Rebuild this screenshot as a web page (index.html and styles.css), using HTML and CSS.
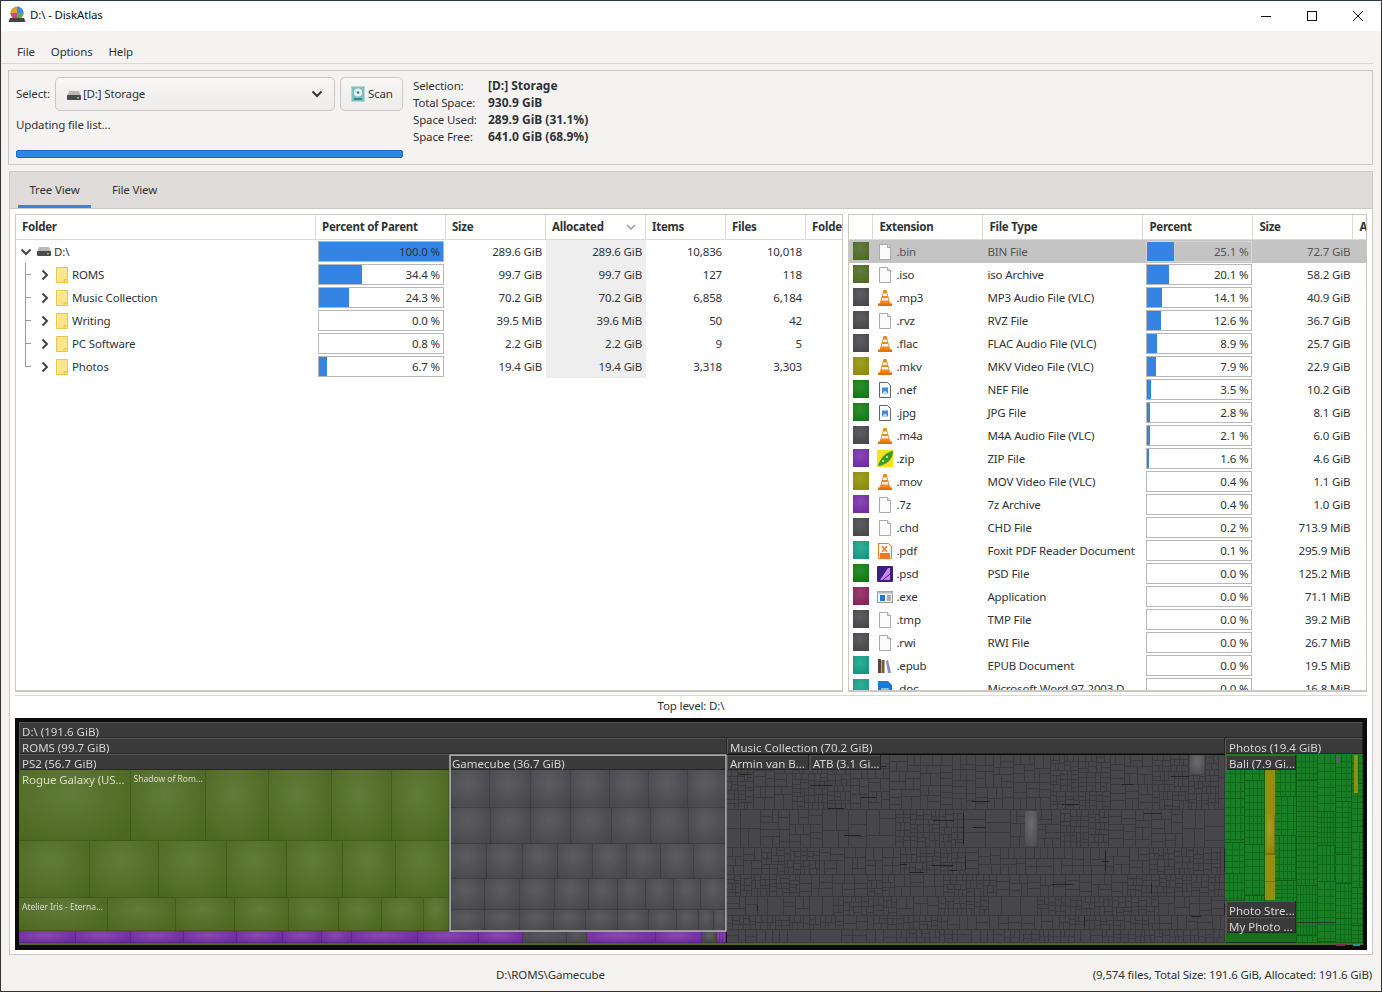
FILE: index.html
```html
<!DOCTYPE html>
<html lang="en">
<head>
<meta charset="utf-8">
<title>D:\ - DiskAtlas</title>
<link rel="stylesheet" href="styles.css">
</head>
<body>
<div class="window">
  <header class="titlebar">
    <svg class="appicon" width="18" height="18" viewBox="0 0 18 18"><circle cx="9" cy="7" r="6.500" fill="#e0a030"/><path d="M9 .5a6.500 6.500 0 0 1 6.500 6.500H9z" fill="#3f8fd8"/><path d="M15.500 7A6.500 6.500 0 0 1 9 13.500V7z" fill="#5fae4a"/><path d="M2.500 7A6.500 6.500 0 0 0 9 13.500V7z" fill="#c24a8a"/><path d="M2 12h14l1.500 4h-17z" fill="#444"/></svg>
    <span class="title">D:\ - DiskAtlas</span>
    <div class="winbtns">
      <svg width="46" height="30" viewBox="0 0 46 30"><path d="M18 15.500h10" stroke="#111" fill="none"/></svg>
      <svg width="46" height="30" viewBox="0 0 46 30"><rect x="18.500" y="10.500" width="9" height="9" stroke="#111" fill="none"/></svg>
      <svg width="46" height="30" viewBox="0 0 46 30"><path d="M18 10l10 10M28 10l-10 10" stroke="#111" fill="none"/></svg>
    </div>
  </header>
  <nav class="menubar"><span>File</span><span>Options</span><span>Help</span></nav>
  <section class="selpanel">
    <div class="selleft">
      <div class="selrow">
        <span class="lift">Select:</span>
        <div class="combo">
          <svg class="drive" width="14" height="9" viewBox="0 0 14 9"><path d="M2 0h10l2 5H0z" fill="#b9b9b9"/><rect y="4" width="14" height="5" rx="1" fill="#4a4a4a"/><rect x="10" y="6" width="2" height="1.500" fill="#5ed35e"/></svg>
          <span class="combotext lift">[D:] Storage</span>
          <svg class="caret" width="12" height="8" viewBox="0 0 12 8"><path d="M1.500 1.500L6 6l4.500-4.500" stroke="#2e3436" stroke-width="2" fill="none"/></svg>
        </div>
        <div class="scanbtn">
          <svg width="14" height="16" viewBox="0 0 14 16"><rect x="0.500" y="0.500" width="13" height="15" fill="#7fc0c0" stroke="#b8d8d8"/><circle cx="7" cy="6.500" r="4" fill="#e8f2f2"/><circle cx="7" cy="6.500" r="1.300" fill="#3a7a7a"/><rect x="3" y="12" width="8" height="2" fill="#3f8a8a"/></svg>
          <span class="lift">Scan</span>
        </div>
      </div>
      <div class="updating">Updating file list...</div>
      <div class="progress"></div>
    </div>
    <dl class="stats">
      <dt>Selection:</dt><dd>[D:] Storage</dd>
      <dt>Total Space:</dt><dd>930.9 GiB</dd>
      <dt>Space Used:</dt><dd>289.9 GiB (31.1%)</dd>
      <dt>Space Free:</dt><dd>641.0 GiB (68.9%)</dd>
    </dl>
  </section>
  <section class="tabpane">
    <div class="tabs"><span class="tab active">Tree View</span><span class="tab">File View</span></div>
    <div class="tabbody">
      <div class="tables">
        <div class="table lefttable" id="tree">
          <div class="row head"><div class="c c-folder">Folder</div><div class="c c-pp">Percent of Parent</div><div class="c c-size">Size</div><div class="c c-alloc">Allocated<svg class="sort" width="10" height="6" viewBox="0 0 10 6"><path d="M1 1l4 4 4-4" stroke="#999" stroke-width="1.500" fill="none"/></svg></div><div class="c c-items">Items</div><div class="c c-files">Files</div><div class="c c-folders">Folders</div></div>
        </div>
        <div class="table righttable" id="ext">
          <div class="row head"><div class="c c-sw"></div><div class="c c-ext">Extension</div><div class="c c-type">File Type</div><div class="c c-pct">Percent</div><div class="c c-rsize">Size</div><div class="c c-more">Allocated</div></div>
        </div>
      </div>
      <div class="toplevel">Top level: D:\</div>
      <div class="treemap" id="treemap"><canvas id="tm" width="1352" height="232"></canvas></div>
    </div>
  </section>
  <footer class="status"><span class="path">D:\ROMS\Gamecube</span><span class="summary">(9,574 files, Total Size: 191.6 GiB, Allocated: 191.6 GiB)</span></footer>
</div>
<script src="app.js"></script>
</body>
</html>
```
FILE: styles.css
```css
* { box-sizing: border-box; }
html, body { margin: 0; padding: 0; background: #f5f3f2; }
body { font: 11.500px "Noto Sans", sans-serif; letter-spacing: -0.15px; color: #2e3436; width: 1382px; height: 992px; overflow: hidden; }
.window { width: 1382px; height: 992px; border-top: 1px solid #2b3a4a; border-left: 1px solid #333; border-right: 1px solid #333; border-bottom: 1px solid #333; display: flex; flex-direction: column; background: #f5f3f2; overflow: hidden; }
.titlebar { height: 30px; background: #fff; display: flex; align-items: center; padding-left: 7px; flex: none; color: #111; }
.appicon { margin-right: 4px; margin-top: -2px; }
.title { flex: 1; margin-top: -3px; }
.winbtns { display: flex; margin-top: -1px; }
.winbtns svg { display: block; }
.menubar { height: 33px; flex: none; display: flex; align-items: center; gap: 16px; padding: 11px 16px 3px 16px; margin-right: 8px; border-bottom: 1px solid #dcd9d5; }
.selpanel { flex: none; margin: 6px 8px 0 7px; height: 95px; border: 1px solid #cdc7c2; display: flex; padding: 6px 7px; }
.selleft { width: 388px; flex: none; display: flex; flex-direction: column; }
.selrow { display: flex; align-items: center; gap: 5px; height: 34px; }
.lift { padding-bottom: 2px; }
.combo { width: 280px; height: 34px; border: 1px solid #cdc7c2; border-radius: 5px; background: linear-gradient(#f8f7f6, #eeecea); display: flex; align-items: center; padding: 0 11px 0 11px; flex: none; }
.drive { margin-right: 2px; margin-top: 2px; }
.combotext { flex: 1; }
.scanbtn { width: 63px; height: 34px; border: 1px solid #cdc7c2; border-radius: 5px; background: linear-gradient(#f8f7f6, #eeecea); display: flex; align-items: center; gap: 3px; padding-left: 10px; flex: none; }
.updating { margin-top: 5px; height: 17px; line-height: 17px; }
.progress { margin-top: 17px; height: 8px; width: 387px; background: #3584e4; border: 1px solid #1f68c4; border-radius: 2px; }
.stats { margin: 0 0 0 9px; display: grid; grid-template-columns: 75px auto; grid-auto-rows: 17px; line-height: 17px; }
.stats dt { font-weight: 400; }
.stats dd { margin: 0; font-weight: 700; font-size: 12px; letter-spacing: 0; }
.tabpane { flex: 1; margin: 6px 8px 0 8px; border: 1px solid #cdc7c2; display: flex; flex-direction: column; min-height: 0; }
.tabs { height: 37px; flex: none; background: #e0dcd9; display: flex; padding-left: 8px; border-bottom: 1px solid #cdc7c2; }
.tab { width: 73px; height: 36px; line-height: 36px; text-align: center; }
.tab + .tab { width: 87px; }
.tab.active { border-bottom: 3px solid #3584e4; }
.tabbody { flex: 1; background: #fff; padding: 5px 5px 5px 5px; display: flex; flex-direction: column; min-height: 0; }
.tables { display: flex; gap: 5px; height: 478px; flex: none; }
.table { border: 1px solid #cdc7c2; border-bottom-width: 2px; overflow: hidden; background: #fff; }
.lefttable { width: 829px; }
.righttable { width: 519px; }
.row { display: flex; height: 23px; line-height: 24px; white-space: nowrap; }
.row.head { height: 25px; line-height: 24px; font-weight: 700; letter-spacing: -0.25px; border-bottom: 1px solid #dcd9d5; }
.row.head .c { border-right: 1px solid #dcd9d5; height: 24px; padding: 0 6px; overflow: hidden; position: relative; }
.c { flex: none; overflow: hidden; }
.c-folder { width: 300px; display: flex; align-items: center; }
.c-pp { width: 130px; }
.c-size, .c-alloc { width: 100px; }
.c-items, .c-files { width: 80px; }
.c-folders { width: 60px; }
.c-sw { width: 25px; }
.row.head .c-sw { width: 24px; }
.c-ext { width: 110px; }
.c-type { width: 160px; }
.c-pct { width: 110px; }
.c-rsize { width: 100px; }
.c-more { width: 30px; }
.num { text-align: right; padding-right: 4px; }
.row .num-alloc { background: #eeeeee; }
.sort { position: absolute; right: 9px; top: 9px; }
.barbox { margin: 1px 2px 0 2px; height: 21px; border: 1px solid #b8b8b8; position: relative; line-height: 20px; text-align: right; padding-right: 3px; background: #fff; }
.barfill { position: absolute; left: 0; top: 0; bottom: 0; background: #3584e4; }
.barlabel { position: relative; }
.selrowbg { background: #c4c4c4; color: #555; }
.selrowbg .barbox { background: #c4c4c4; border-color: #d4d4d4; }
.tree-name { display: flex; align-items: center; height: 23px; position: relative; }
.tree-name span { padding-top: 1px; }
.guide { position: absolute; left: 9px; top: -1px; width: 1px; background: #9a9a9a; height: 24px; }
.guide.last { height: 12px; }
.hline { position: absolute; left: 9px; top: 11px; width: 6px; height: 1px; background: #9a9a9a; }
.expander { flex: none; margin-left: 25px; margin-right: 7px; display: block; }
.folder { flex: none; margin-right: 4px; display: block; }
.expander.root { margin-left: 4px; margin-right: 5px; }
.root-drive { margin-right: 3px; flex: none; }
.swatch { display: block; margin: 2px 0 0 4px; width: 16px; height: 18px; background: radial-gradient(circle at 45% 35%, var(--a), var(--b)); }
.c-ext.cell { display: flex; align-items: center; padding-left: 3px; }
.c-ext.cell svg { flex: none; margin-right: 3px; width: 16px; height: 18px; }
.c-ext.cell span { padding-top: 1px; }
.c-type.cell { padding-left: 3px; }
.treemap { position: relative; flex: none; width: 1352px; height: 232px; background: #0c0c0c; overflow: hidden; }
.treemap canvas { display: block; }
.tmlabel { position: absolute; color: #d4d4d4; line-height: 16px; height: 16px; white-space: nowrap; overflow: hidden; letter-spacing: 0; }
.tmlabel.small { font-size: 8.500px; color: #d9dcc8; }
.tmlabel.big { font-size: 11.500px; color: #d9dcc8; letter-spacing: -0.1px; }
.toplevel { margin-top: 3px; height: 23px; line-height: 20px; border-top: 1px solid #dcd9d5; text-align: center; flex: none; }
.status { height: 36px; flex: none; display: flex; justify-content: space-between; align-items: center; padding: 2px 9px 0 495px; }
```
FILE: app.js
```js
(function () {
  var icons = {
    blank: '<svg viewBox="0 0 16 18"><path d="M2.500 1.500h8l3 3v12h-11z" fill="#fbfbfb" stroke="#aaa"/><path d="M10.500 1.500v3h3" fill="#e6e6e6" stroke="#aaa"/></svg>',
    vlc: '<svg viewBox="0 0 16 18"><path d="M6.500 1h3l4 14h-11z" fill="#f08a1c"/><path d="M6.200 4.500h3.600l.6 2.500H5.600zM5 9h6l.6 2.500H4.400z" fill="#f4f4f4"/><rect x="1" y="14.500" width="14" height="2.500" fill="#e36f0e"/></svg>',
    img: '<svg viewBox="0 0 16 18"><path d="M2.500 1.500h8l3 3v12h-11z" fill="#fbfbfb" stroke="#666"/><rect x="5" y="6.500" width="6" height="6" fill="#3a8fe0"/><path d="M5 12.500l3-3 3 3z" fill="#bfe0f7"/></svg>',
    zip: '<svg viewBox="0 0 16 18"><rect width="16" height="17" fill="#f4e21a"/><path d="M1 16C3 8 9 2 16 1c0 8-6 14-15 15z" fill="#3c9a2c"/><circle cx="6" cy="11" r="1" fill="#e8f6a0"/><circle cx="10" cy="7" r="1" fill="#e8f6a0"/></svg>',
    pdf: '<svg viewBox="0 0 16 18"><path d="M1.500 1.500h10l3 3v12h-13z" fill="#fff" stroke="#f0781e"/><path d="M5 4l5 6M10 4l-5 6" stroke="#f0781e" stroke-width="1.500"/><rect x="3" y="11" width="10" height="5" fill="#f0781e"/></svg>',
    psd: '<svg viewBox="0 0 16 18"><rect width="16" height="16" y="1" rx="1" fill="#3f1f7e"/><path d="M3 15L11 3h2v12z" fill="#c886e8"/><path d="M6 15l7-6" stroke="#3f1f7e"/></svg>',
    exe: '<svg viewBox="0 0 16 18"><rect x="0.500" y="3.500" width="15" height="11" fill="#f4f4f4" stroke="#999"/><rect x="0.500" y="3.500" width="15" height="2" fill="#bbb"/><rect x="3" y="7" width="5" height="6" fill="#1e78d6"/><path d="M10 8h4M10 10h4M10 12h4" stroke="#666"/></svg>',
    epub: '<svg viewBox="0 0 16 18"><rect x="1" y="2" width="3" height="14" fill="#5b4636"/><rect x="4.500" y="3" width="3" height="13" fill="#7a5a3c"/><path d="M9 4l2-1 3 13h-3z" fill="#7c8fc8"/></svg>',
    word: '<svg viewBox="0 0 16 18"><path d="M1 1h10l4 4v12H1z" fill="#1e78d6"/><path d="M4 9h8M4 12h8" stroke="#fff"/></svg>'
  };
  var G = ['#647c3e', '#4c671e'], D = ['#5e5e62', '#434347'], Y = ['#a0a022', '#86860a'], E = ['#2c8f2c', '#127012'], P = ['#8a48b4', '#6a269e'], T = ['#2eb09a', '#119077'], M = ['#a03c70', '#7d1f50'];
  var ext = [
    [G, 'blank', '.bin', 'BIN File', 25.1, '72.7 GiB'], [G, 'blank', '.iso', 'iso Archive', 20.1, '58.2 GiB'],
    [D, 'vlc', '.mp3', 'MP3 Audio File (VLC)', 14.1, '40.9 GiB'], [D, 'blank', '.rvz', 'RVZ File', 12.6, '36.7 GiB'],
    [D, 'vlc', '.flac', 'FLAC Audio File (VLC)', 8.9, '25.7 GiB'], [Y, 'vlc', '.mkv', 'MKV Video File (VLC)', 7.9, '22.9 GiB'],
    [E, 'img', '.nef', 'NEF File', 3.5, '10.2 GiB'], [E, 'img', '.jpg', 'JPG File', 2.8, '8.1 GiB'],
    [D, 'vlc', '.m4a', 'M4A Audio File (VLC)', 2.1, '6.0 GiB'], [P, 'zip', '.zip', 'ZIP File', 1.6, '4.6 GiB'],
    [Y, 'vlc', '.mov', 'MOV Video File (VLC)', 0.4, '1.1 GiB'], [P, 'blank', '.7z', '7z Archive', 0.4, '1.0 GiB'],
    [D, 'blank', '.chd', 'CHD File', 0.2, '713.9 MiB'], [T, 'pdf', '.pdf', 'Foxit PDF Reader Document', 0.1, '295.9 MiB'],
    [E, 'psd', '.psd', 'PSD File', 0.0, '125.2 MiB'], [M, 'exe', '.exe', 'Application', 0.0, '71.1 MiB'],
    [D, 'blank', '.tmp', 'TMP File', 0.0, '39.2 MiB'], [D, 'blank', '.rwi', 'RWI File', 0.0, '26.7 MiB'],
    [T, 'epub', '.epub', 'EPUB Document', 0.0, '19.5 MiB'], [T, 'word', '.doc', 'Microsoft Word 97-2003 D', 0.0, '16.8 MiB']
  ];
  var extEl = document.getElementById('ext');
  ext.forEach(function (r, i) {
    var fill = Math.round(r[4] * 1.02 * 10) / 10;
    if (r[4] < 1.6) fill = 0;
    var row = document.createElement('div');
    row.className = 'row' + (i === 0 ? ' selrowbg' : '');
    row.innerHTML = '<div class="c c-sw"><span class="swatch" style="--a:' + r[0][0] + ';--b:' + r[0][1] + '"></span></div>' +
      '<div class="c c-ext cell">' + icons[r[1]] + '<span>' + r[2] + '</span></div>' +
      '<div class="c c-type cell">' + r[3] + '</div>' +
      '<div class="c c-pct"><div class="barbox"><div class="barfill" style="width:' + fill + '%"></div><span class="barlabel">' + r[4].toFixed(1) + ' %</span></div></div>' +
      '<div class="c c-rsize num">' + r[5] + '</div>';
    extEl.appendChild(row);
  });
  var tree = [
    ['D:\\', 100, '289.6 GiB', '289.6 GiB', '10,836', '10,018'], ['ROMS', 34.4, '99.7 GiB', '99.7 GiB', '127', '118'],
    ['Music Collection', 24.3, '70.2 GiB', '70.2 GiB', '6,858', '6,184'], ['Writing', 0, '39.5 MiB', '39.6 MiB', '50', '42'],
    ['PC Software', 0.8, '2.2 GiB', '2.2 GiB', '9', '5'], ['Photos', 6.7, '19.4 GiB', '19.4 GiB', '3,318', '3,303']
  ];
  var chevR = '<svg class="expander" width="8" height="12" viewBox="0 0 8 12"><path d="M1.500 1.500L6 6l-4.500 4.500" stroke="#444" stroke-width="2" fill="none"/></svg>';
  var chevD = '<svg class="expander root" width="12" height="8" viewBox="0 0 12 8"><path d="M1.500 1.500L6 6l4.500-4.500" stroke="#444" stroke-width="2" fill="none"/></svg>';
  var drive = '<svg class="root-drive" width="14" height="9" viewBox="0 0 14 9"><path d="M2 0h10l2 5H0z" fill="#b9b9b9"/><rect y="4" width="14" height="5" rx="1" fill="#4a4a4a"/><rect x="10" y="6" width="2" height="1.500" fill="#5ed35e"/></svg>';
  var folder = '<svg class="folder" width="12" height="16" viewBox="0 0 12 16"><rect x="0.500" y="0.500" width="11" height="15" fill="#fde58c" stroke="#eec64a"/><path d="M8 15.500v-3h3.500" fill="#f4cf5c" stroke="#eec64a"/></svg>';
  var treeEl = document.getElementById('tree');
  tree.forEach(function (r, i) {
    var row = document.createElement('div');
    row.className = 'row';
    var name = i === 0
      ? chevD + drive + '<span>' + r[0] + '</span>'
      : '<i class="guide' + (i === 5 ? ' last' : '') + '"></i><i class="hline"></i>' + chevR + folder + '<span>' + r[0] + '</span>';
    var w = r[1] === 0.8 ? 0 : r[1];
    row.innerHTML = '<div class="c c-folder"><div class="tree-name">' + name + '</div></div>' +
      '<div class="c c-pp"><div class="barbox"><div class="barfill" style="width:' + w + '%"></div><span class="barlabel">' + r[1].toFixed(1) + ' %</span></div></div>' +
      '<div class="c c-size num">' + r[2] + '</div><div class="c c-alloc num num-alloc">' + r[3] + '</div>' +
      '<div class="c c-items num">' + r[4] + '</div><div class="c c-files num">' + r[5] + '</div>';
    treeEl.appendChild(row);
  });

  // treemap: coordinates below are page coordinates, shifted by the map origin
  var OX = 15, OY = 718;
  var cv = document.getElementById('tm'), g = cv.getContext('2d');
  var seed = 12345;
  function rnd() { seed = (seed * 16807) % 2147483647; return seed / 2147483647; }
  function tile(x0, y0, x1, y1, c) {
    var w = x1 - x0, h = y1 - y0, cx = x0 - OX + w * 0.45, cy = y0 - OY + h * 0.35;
    g.save();
    g.beginPath(); g.rect(x0 - OX, y0 - OY, w, h); g.clip();
    g.translate(cx, cy); g.scale(w * 0.72, h * 0.8);
    var gr = g.createRadialGradient(0, 0, 0, 0, 0, 1);
    gr.addColorStop(0, c[0]); gr.addColorStop(1, c[1]);
    g.fillStyle = gr;
    g.fillRect(-3, -3, 6, 6);
    g.restore();
    g.fillStyle = 'rgba(0,0,0,0.13)';
    g.fillRect(x1 - OX - 1, y0 - OY, 1, h);
    g.fillRect(x0 - OX, y1 - OY - 1, w, 1);
  }
  function band(y0, y1, xs, c) {
    for (var i = 0; i < xs.length - 1; i++) tile(xs[i], y0, xs[i + 1], y1, c);
  }
  function flat(x0, y0, x1, y1, col) {
    g.fillStyle = col; g.fillRect(x0 - OX, y0 - OY, x1 - x0, y1 - y0);
  }
  flat(19, 943, 1363, 945, '#4c671e');
  var GG = ['#627b3b', '#4c671e'];
  band(770, 841, [19, 131, 206, 269, 332, 392, 449], GG);
  band(841, 898, [19, 90, 159, 227, 287, 343, 396, 449], GG);
  band(898, 931, [19, 108, 176, 235, 289, 339, 382, 424, 449], GG);
  band(931, 943, [19, 76, 131, 184, 237, 283, 322, 352, 418, 479, 523], P);
  band(931, 943, [523, 567, 587], ['#58585c', '#47474b']);
  band(931, 943, [587, 656, 702], P);
  band(931, 943, [702, 717], D);
  band(931, 943, [717, 720, 723, 726], P);
  var gD = ['#5c5c60', '#47474b'];
  band(770, 808, [450, 490, 531, 571, 610, 649, 688, 726], gD);
  band(808, 844, [450, 491, 531, 571, 612, 651, 689, 726], gD);
  band(844, 879, [450, 487, 523, 558, 593, 627, 661, 694, 726], gD);
  band(879, 910, [450, 485, 520, 555, 589, 618, 646, 674, 701, 726], gD);
  band(910, 931, [450, 485, 520, 554, 586, 618, 649, 677, 699, 714, 726], gD);
  // textured area: recursive splits, each leaf gets a thin darker outline
  function split(x0, y0, x1, y1, min, draw) {
    var w = x1 - x0, h = y1 - y0;
    if ((w <= min && h <= min) || (w * h < min * min * 1.4)) { draw(x0, y0, x1, y1); return; }
    var f = 0.32 + rnd() * 0.36;
    if (w > h * 1.1) { var m = Math.round(x0 + w * f); split(x0, y0, m, y1, min, draw); split(m, y0, x1, y1, min, draw); }
    else { var n = Math.round(y0 + h * f); split(x0, y0, x1, n, min, draw); split(x0, n, x1, y1, min, draw); }
  }
  function leaf(base, line) {
    return function (x0, y0, x1, y1) {
      flat(x0, y0, x1, y1, base);
      g.fillStyle = line;
      g.fillRect(x0 - OX, y1 - OY - 1, x1 - x0, 1);
      g.fillRect(x1 - OX - 1, y0 - OY, 1, y1 - y0);
    };
  }
  var ms = [755, 810, 848, 875, 897, 916, 930, 943];
  flat(727, 755, 1225, 943, '#45454a');
  for (var b = 0; b < ms.length - 1; b++) {
    var x = 727;
    while (x < 1225) {
      var nx = Math.min(1225, x + 22 + Math.round(rnd() * 55));
      var coarse = rnd();
      var mn = coarse < 0.18 ? 17 : coarse < 0.55 ? 10 : 6;
      split(x, ms[b], nx, ms[b + 1], mn, leaf('#47474b', '#3a3a3e'));
      if (rnd() < 0.14) {
        flat(nx - 1, ms[b] + Math.round(rnd() * 10), nx, ms[b + 1] - Math.round(rnd() * 8), '#222226');
      }
      x = nx;
    }
  }
  for (var d = 0; d < 20; d++) {
    var dx = 730 + Math.round(rnd() * 470), dy = 760 + Math.round(rnd() * 175);
    flat(dx, dy, dx + 6 + Math.round(rnd() * 16), dy + 1, '#232326');
  }
  tile(1025, 811, 1038, 847, ['#6c6c70', '#4b4b4f']);
  tile(1190, 755, 1205, 775, ['#6c6c70', '#4b4b4f']);
  // Photos: stacks of regular fine grids
  flat(1225, 754, 1363, 943, '#187f24');
  function grid(x0, y0, x1, y1, cw, ch) {
    g.fillStyle = '#11691c';
    for (var gx = x0 + cw; gx < x1; gx += cw) g.fillRect(gx - OX, y0 - OY, 1, y1 - y0);
    for (var gy = y0 + ch; gy < y1; gy += ch) g.fillRect(x0 - OX, gy - OY, x1 - x0, 1);
    g.fillStyle = '#0f5f19';
    g.fillRect(x1 - OX - 1, y0 - OY, 1, y1 - y0);
    g.fillRect(x0 - OX, y1 - OY - 1, x1 - x0, 1);
  }
  [[1225, 1245], [1245, 1265], [1275, 1297], [1297, 1318], [1318, 1336], [1336, 1352], [1352, 1363]].forEach(function (c) {
    var y = 755;
    while (y < 943) {
      var ny = Math.min(943, y + 25 + Math.round(rnd() * 40));
      grid(c[0], y, c[1], ny, 3 + Math.round(rnd() * 4), 4 + Math.round(rnd() * 5));
      y = ny;
    }
  });
  flat(1265, 770, 1275, 900, '#8f8f10');
  tile(1265, 815, 1275, 854, Y);
  flat(1265, 854, 1275, 855, '#73730a'); flat(1265, 881, 1275, 882, '#73730a');
  flat(1354, 755, 1358, 793, '#8f8f10');
  flat(1336, 755, 1340, 762, '#5c5c62');
  flat(1226, 933, 1296, 942, '#1b6b22');
  flat(1226, 942, 1296, 943, '#1c2a1c');
  flat(1297, 922, 1336, 923, '#1f3a20');
  flat(1336, 944, 1345, 946, '#8a2458');
  flat(1353, 944, 1360, 946, '#14a08a');
  function bar(x0, y0, x1, y1) {
    flat(x0, y0, x1, y1, '#3a3a3a');
    flat(x0, y0, x1, y0 + 1, '#565656');
    flat(x0, y1 - 1, x1, y1, '#262626');
    flat(x0, y0, x0 + 1, y1, '#565656');
    flat(x1 - 1, y0, x1, y1, '#262626');
  }
  bar(19, 722, 1363, 738); bar(19, 738, 727, 754); bar(727, 738, 1225, 754); bar(1225, 738, 1363, 754);
  bar(19, 754, 450, 770); bar(450, 755, 726, 770); bar(727, 755, 809, 770); bar(810, 755, 881, 770);
  bar(1226, 755, 1296, 770); bar(1226, 901, 1296, 917); bar(1226, 917, 1296, 933);
  g.strokeStyle = '#b9b9b9'; g.lineWidth = 1.5;
  g.strokeRect(450 - OX, 755 - OY, 276, 176);

  var labels = [
    ['D:\\ (191.6 GiB)', 22, 724], ['ROMS (99.7 GiB)', 22, 740], ['PS2 (56.7 GiB)', 22, 756],
    ['Gamecube (36.7 GiB)', 452, 756], ['Music Collection (70.2 GiB)', 730, 740], ['Armin van B...', 730, 756],
    ['ATB (3.1 Gi...', 813, 756], ['Photos (19.4 GiB)', 1229, 740], ['Bali (7.9 Gi...', 1229, 756],
    ['Photo Stre...', 1229, 903], ['My Photo ...', 1229, 919],
    ['Rogue Galaxy (US...', 22, 772, 'big'], ['Shadow of Rom...', 133.500, 771, 'small'], ['Atelier Iris - Eterna...', 22, 899, 'small']
  ];
  var tm = document.getElementById('treemap');
  labels.forEach(function (l) {
    var s = document.createElement('span');
    s.className = 'tmlabel' + (l[3] ? ' ' + l[3] : '');
    s.textContent = l[0];
    s.style.left = (l[1] - OX) + 'px';
    s.style.top = (l[2] - OY) + 'px';
    tm.appendChild(s);
  });
})();
```
